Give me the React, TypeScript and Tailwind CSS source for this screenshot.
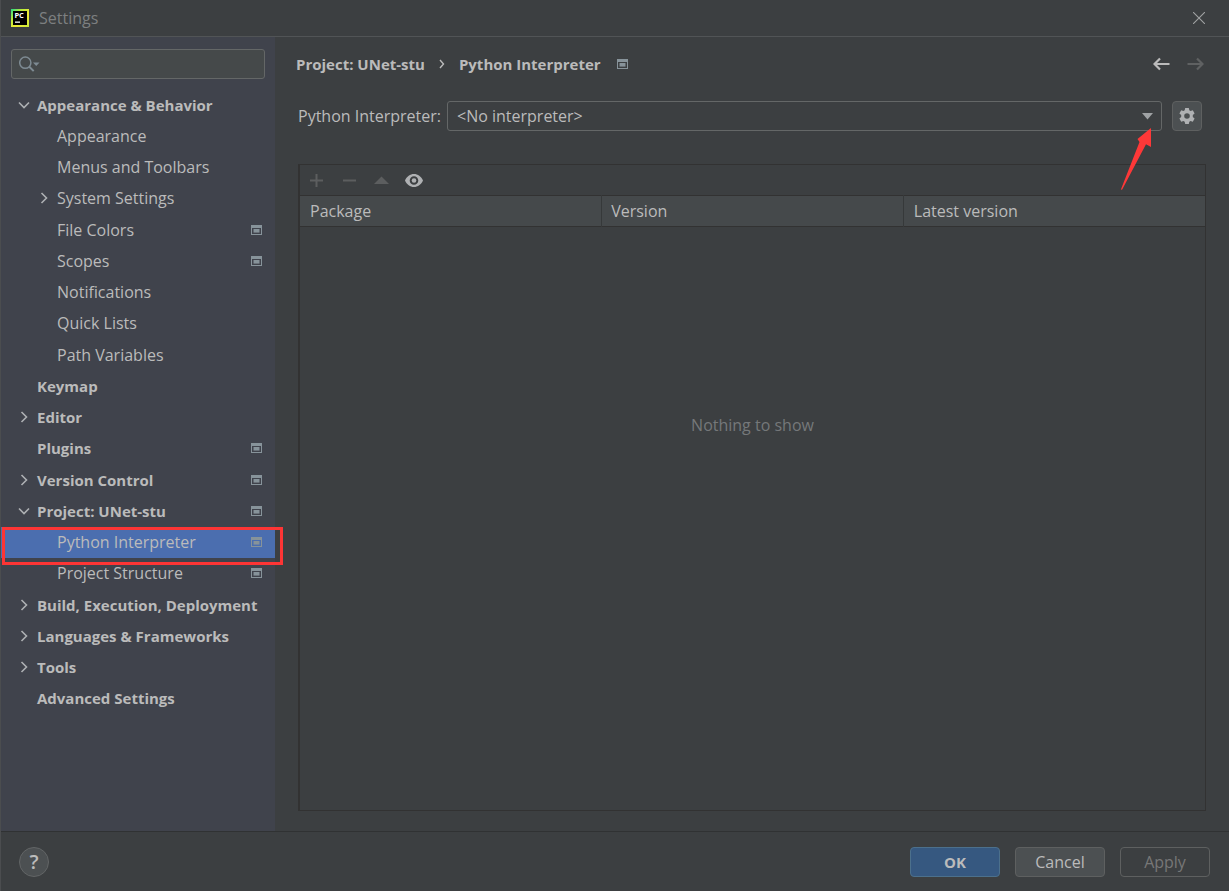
import React from "react";

type TreeRow = {
  label: string;
  child?: boolean;
  chevron?: "open" | "closed";
  scoped?: boolean;
  selected?: boolean;
};

const rows: TreeRow[] = [
  { label: "Appearance & Behavior", chevron: "open" },
  { label: "Appearance", child: true },
  { label: "Menus and Toolbars", child: true },
  { label: "System Settings", child: true, chevron: "closed" },
  { label: "File Colors", child: true, scoped: true },
  { label: "Scopes", child: true, scoped: true },
  { label: "Notifications", child: true },
  { label: "Quick Lists", child: true },
  { label: "Path Variables", child: true },
  { label: "Keymap" },
  { label: "Editor", chevron: "closed" },
  { label: "Plugins", scoped: true },
  { label: "Version Control", chevron: "closed", scoped: true },
  { label: "Project: UNet-stu", chevron: "open", scoped: true },
  { label: "Python Interpreter", child: true, scoped: true, selected: true },
  { label: "Project Structure", child: true, scoped: true },
  { label: "Build, Execution, Deployment", chevron: "closed" },
  { label: "Languages & Frameworks", chevron: "closed" },
  { label: "Tools", chevron: "closed" },
  { label: "Advanced Settings" },
];

function ScopeIcon() {
  return (
    <svg width="11" height="10" viewBox="0 0 11 10" className="shrink-0" aria-hidden="true">
      <path d="M0 0h11v10H0zM1 3v6h9V3z" fill="#87939a" fillRule="evenodd" />
      <path d="M2.5 4h6v3.6h-6z" fill="#87939a" />
    </svg>
  );
}

function Chevron({ state }: { state: "open" | "closed" }) {
  return (
    <svg width="12" height="12" viewBox="0 0 12 12" fill="none" stroke="#adb0b3" strokeWidth="1.6" aria-hidden="true">
      {state === "open" ? <path d="M1 3.5l5 5 5-5" /> : <path d="M3.5 1l5 5-5 5" />}
    </svg>
  );
}

function AppLogo() {
  return (
    <svg width="18" height="18" viewBox="0 0 18 18" aria-hidden="true">
      <defs>
        <linearGradient id="logo" x1="0" y1="0" x2="1" y2="1">
          <stop offset="0" stopColor="#21d789" />
          <stop offset="0.3" stopColor="#b5ec3c" />
          <stop offset="0.6" stopColor="#f0ec35" />
          <stop offset="1" stopColor="#c9e83a" />
        </linearGradient>
      </defs>
      <path d="M0 0h18v18H0z" fill="url(#logo)" />
      <path d="M2 2h14v14H2z" fill="#000" />
      <path d="M4 12.5h5v1.300H4z" fill="#fff" />
      <text x="3.400" y="9" fontSize="7.500" fontWeight="700" fill="#fff" fontFamily="Open Sans, sans-serif">
        PC
      </text>
    </svg>
  );
}

function TreeItem({ row }: { row: TreeRow }) {
  return (
    <li className={row.selected ? "relative flex bg-[#4b6eaf]" : "flex"}>
      <a
        href="#"
        aria-current={row.selected ? "page" : undefined}
        className={
          "flex min-w-0 flex-1 items-center whitespace-nowrap pr-[13px] " +
          (row.child ? "pl-9" : "pl-4 text-[15px] font-bold")
        }
      >
        <span className="flex w-5 shrink-0 items-center pl-px">
          {row.chevron && <Chevron state={row.chevron} />}
        </span>
        <span className="flex-1">{row.label}</span>
        {row.scoped && <ScopeIcon />}
      </a>
      {row.selected && (
        <span className="pointer-events-none absolute -right-2 left-px top-0 z-10 h-[38px] border-3 border-[#fd3535]" />
      )}
    </li>
  );
}

export default function App() {
  return (
    <div className="flex min-h-screen flex-col border-l border-[#4b4d4f] bg-[#3c3f41] font-['Open_Sans','Noto_Sans',sans-serif] text-[16px] leading-5 text-[#bbbbbb]">
      <header className="box-content flex h-9 shrink-0 items-center border-b border-[#515456] pl-[10px] pr-6">
        <AppLogo />
        <h1 className="flex-1 pl-[10px] text-[#7d7f80]">Settings</h1>
        <button type="button" aria-label="Close">
          <svg width="12" height="12" viewBox="0 0 12 12" stroke="#a0a2a3" strokeWidth="1.1" aria-hidden="true">
            <path d="M0 0l12 12M12 0L0 12" />
          </svg>
        </button>
      </header>

      <div className="flex flex-1">
        <nav aria-label="Settings sections" className="w-[274px] shrink-0 bg-[#40434c]">
          <div className="mx-[10px] mt-3 flex h-[30px] items-center rounded-[3px] border border-[#646767] bg-[#45494a] pl-[7px]">
            <svg width="21" height="16" viewBox="0 0 21 16" fill="none" stroke="#7e8b93" strokeWidth="1.5" aria-hidden="true">
              <circle cx="6.3" cy="6.7" r="5.6" />
              <path d="M10.3 10.7l4.4 4.4" strokeWidth="2" />
              <path d="M14 6.500h6.500l-3.250 3.500z" fill="#7e8b93" stroke="none" />
            </svg>
            <input type="search" aria-label="Search settings" className="min-w-0 flex-1 bg-transparent px-1 outline-none" />
          </div>
          <ul className="mt-[10px] grid h-[625px] auto-rows-fr">
            {rows.map((row) => (
              <TreeItem key={row.label} row={row} />
            ))}
          </ul>
        </nav>

        <main className="flex min-w-0 flex-1 flex-col px-[23px] pb-5">
          <div className="-ml-[2px] mr-[2px] mt-[17px] flex h-5 items-center text-[15px] font-bold">
            <a href="#">Project: UNet-stu</a>
            <svg width="6" height="10" viewBox="0 0 6 10" fill="none" stroke="#bbbbbb" strokeWidth="1.4" className="mx-[14px]" aria-hidden="true">
              <path d="M1 1l3.5 4L1 9" />
            </svg>
            <h2 className="pr-4">Python Interpreter</h2>
            <ScopeIcon />
            <span className="flex-1" />
            <button type="button" aria-label="Back" className="mr-[17px]">
              <svg width="17" height="14" viewBox="0 0 17 14" fill="none" stroke="#bbbbbb" strokeWidth="2.2" aria-hidden="true">
                <path d="M16.5 7H2M7 1.5L1.5 7 7 12.5" />
              </svg>
            </button>
            <button type="button" aria-label="Forward" disabled>
              <svg width="17" height="14" viewBox="0 0 17 14" fill="none" stroke="#5f6162" strokeWidth="2.2" aria-hidden="true">
                <path d="M.5 7H15M10 1.5L15.5 7 10 12.5" />
              </svg>
            </button>
          </div>

          <div className="mt-[27px] flex items-center">
            <label htmlFor="interpreter" className="mr-[6px]">
              Python Interpreter:
            </label>
            <div className="relative flex flex-1">
              <select
                id="interpreter"
                className="h-[30px] w-full appearance-none rounded-[3px] border border-[#646767] bg-[#3c3f41] pl-[9px] outline-none"
              >
                <option>&lt;No interpreter&gt;</option>
              </select>
              <svg width="11" height="7" viewBox="0 0 11 7" className="pointer-events-none absolute right-[9px] top-3" aria-hidden="true">
                <path d="M0 0h11L5.5 6.5z" fill="#9fa2a4" />
              </svg>
              <svg width="32" height="64" viewBox="0 0 32 64" className="pointer-events-none absolute right-[10px] top-[26px] z-10" aria-hidden="true">
                <path d="M31 1v19l-5-2.800L2.200 62.500l-1.400.2L19.500 15l-2-3z" fill="#fd3838" />
              </svg>
            </div>
            <button
              type="button"
              aria-label="Interpreter settings"
              className="ml-[10px] mr-1 flex h-[30px] w-[30px] items-center justify-center rounded-[4px] border border-[#5e6060] bg-[#4c5052]"
            >
              <svg width="16" height="16" viewBox="0 0 16 16" aria-hidden="true">
                <path
                  d="M6.2 0h3.6l.5 2.3 1.2.7 2.3-.7 1.8 3.1-1.8 1.7v1.8l1.8 1.7-1.8 3.1-2.3-.7-1.2.7-.5 2.3H6.2l-.5-2.3-1.2-.7-2.3.7L.4 10.600l1.800-1.700V7.100L.4 5.400l1.800-3.100 2.300.7 1.200-.7zM8 5.200a2.800 2.800 0 1 0 0 5.600 2.800 2.800 0 0 0 0-5.600z"
                  fill="#afb1b3"
                  fillRule="evenodd"
                />
              </svg>
            </button>
          </div>

          <section aria-label="Packages" className="mt-[33px] flex flex-1 flex-col border border-l-2 border-[#323232]">
            <div className="flex h-[30px] items-center pl-[10px]">
              <button type="button" aria-label="Install package" disabled className="mr-5">
                <svg width="13" height="13" viewBox="0 0 13 13" aria-hidden="true">
                  <path d="M5.500 0h2v5.500H13v2H7.500V13h-2V7.500H0v-2h5.500z" fill="#5c5e5f" />
                </svg>
              </button>
              <button type="button" aria-label="Uninstall package" disabled className="mr-[18px]">
                <svg width="13" height="13" viewBox="0 0 13 13" aria-hidden="true">
                  <path d="M0 5.500h13v2H0z" fill="#5c5e5f" />
                </svg>
              </button>
              <button type="button" aria-label="Upgrade package" disabled className="mr-4">
                <svg width="15" height="13" viewBox="0 0 15 13" aria-hidden="true">
                  <path d="M7.500 2.500L15 10H0z" fill="#5c5e5f" />
                </svg>
              </button>
              <button type="button" aria-label="Show early releases">
                <svg width="18" height="13" viewBox="0 0 18 13" aria-hidden="true">
                  <path
                    d="M9 0c3.800 0 7.300 2.600 9 6.500-1.700 3.900-5.200 6.500-9 6.500S1.700 10.400 0 6.500C1.700 2.600 5.200 0 9 0zm0 2.200a4.300 4.300 0 1 0 0 8.600 4.300 4.300 0 0 0 0-8.600z"
                    fill="#afb1b3"
                    fillRule="evenodd"
                  />
                  <circle cx="9" cy="6.500" r="2.300" fill="#afb1b3" />
                </svg>
              </button>
            </div>
            <table className="w-full table-fixed border-y border-[#323232] bg-[#45494b] text-left">
              <thead>
                <tr className="h-[31px]">
                  <th className="border-r border-[#36393a] pl-[10px] font-normal">Package</th>
                  <th className="border-r border-[#36393a] pl-[9px] font-normal">Version</th>
                  <th className="pl-[10px] font-normal">Latest version</th>
                </tr>
              </thead>
            </table>
            <p className="pt-[188px] text-center text-[#75787a]">Nothing to show</p>
          </section>
        </main>
      </div>

      <footer className="flex h-[60px] shrink-0 items-center border-t border-[#303233] pl-[18px] pr-[19px]">
        <button
          type="button"
          aria-label="Help"
          className="mr-auto flex h-[30px] w-[30px] items-center justify-center rounded-full border border-[#626566] bg-[#4c5052] text-[20px] font-semibold"
        >
          ?
        </button>
        <div className="flex gap-[15px]">
          <button type="button" className="h-[30px] w-[90px] rounded-[4px] border border-[#4c708c] bg-[#365880] text-[15px] font-bold">
            OK
          </button>
          <button type="button" className="h-[30px] w-[90px] rounded-[4px] border border-[#5e6060] bg-[#4c5052]">
            Cancel
          </button>
          <button type="button" disabled className="h-[30px] w-[90px] rounded-[4px] border border-[#5e6060] text-[#777777]">
            Apply
          </button>
        </div>
      </footer>
    </div>
  );
}
